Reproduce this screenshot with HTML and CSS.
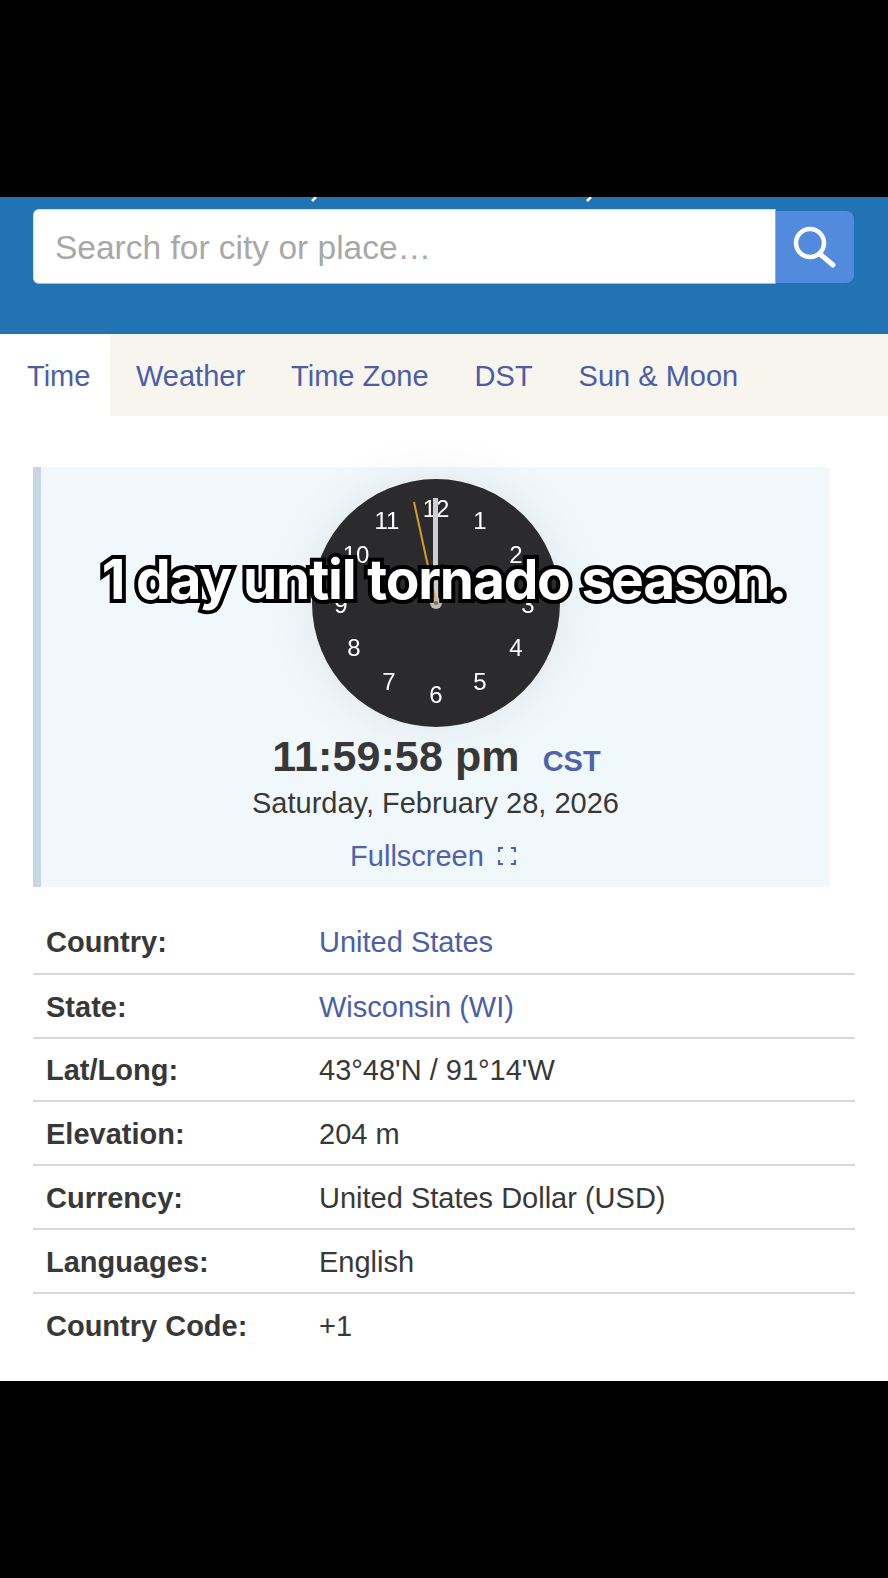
FILE: index.html
```html
<!DOCTYPE html>
<html lang="en">
<head>
    <meta charset="UTF-8">
    <meta name="viewport" content="width=device-width, initial-scale=1.0">
    <title>1 day until tornado season</title>
    <link rel="stylesheet" href="styles.css">
</head>
<body>
    <div class="letterbox-top"></div>

    <div class="page">
        <!-- Search header -->
        <header class="search-header">
            <!-- only the tails of the commas in the scrolled-off heading show -->
            <svg class="heading-ticks" width="888" height="6" viewBox="0 0 888 6">
                <path d="M316 0 L312 4 M591 0 L587 4" stroke="#fff" stroke-width="2.5"/>
            </svg>
            <form class="search-form">
                <div class="search-input">Search for city or place…</div>
                <button type="button" class="search-btn" aria-label="Search">
                    <svg width="46" height="46" viewBox="0 0 46 46">
                        <circle cx="18" cy="19" r="14" fill="none" stroke="#fff" stroke-width="4.5"/>
                        <path d="M28 30 L41 41" stroke="#fff" stroke-width="5" stroke-linecap="round"/>
                    </svg>
                </button>
            </form>
        </header>

        <!-- Tabs -->
        <nav class="tabs">
            <a class="tab tab-active">Time</a>
            <a class="tab">Weather</a>
            <a class="tab">Time Zone</a>
            <a class="tab">DST</a>
            <a class="tab">Sun &amp; Moon</a>
        </nav>

        <!-- Clock panel -->
        <section class="clock-panel">
            <svg class="clock" width="248" height="248" viewBox="0 0 248 248">
                <circle cx="124" cy="124" r="124" fill="#2b2b2d"/>
                <g class="clock-nums" text-anchor="middle">
                    <text x="124" y="38">12</text>
                    <text x="168" y="50">1</text>
                    <text x="204" y="84">2</text>
                    <text x="216" y="134">3</text>
                    <text x="204" y="177">4</text>
                    <text x="168" y="211">5</text>
                    <text x="124" y="224">6</text>
                    <text x="77" y="211">7</text>
                    <text x="42" y="177">8</text>
                    <text x="29" y="134">9</text>
                    <text x="44" y="84">10</text>
                    <text x="75" y="50">11</text>
                </g>
                <rect x="121" y="19" width="5" height="105" fill="#cfcfd1"/>
                <path d="M102 23 L124 124" stroke="#d99a26" stroke-width="2"/>
                <circle cx="124" cy="124" r="6" fill="#bdbdbd"/>
                <circle cx="124" cy="124" r="2" fill="#8a6a3a"/>
            </svg>
            <div class="clock-time">
                <span class="time-value">11:59:58 pm</span>
                <span class="time-zone">CST</span>
            </div>
            <div class="clock-date">Saturday, February 28, 2026</div>
            <a class="fullscreen">
                Fullscreen
                <svg width="18" height="18" viewBox="0 0 18 18" fill="none" stroke="#4f62ad" stroke-width="2.2">
                    <path d="M1 5 V1 H5 M13 1 H17 V5 M17 13 V17 H13 M5 17 H1 V13"/>
                </svg>
            </a>
        </section>

        <!-- Location facts -->
        <table class="facts">
            <tr><th>Country:</th><td><a>United States</a></td></tr>
            <tr><th>State:</th><td><a>Wisconsin (WI)</a></td></tr>
            <tr><th>Lat/Long:</th><td>43°48'N / 91°14'W</td></tr>
            <tr><th>Elevation:</th><td>204 m</td></tr>
            <tr><th>Currency:</th><td>United States Dollar (USD)</td></tr>
            <tr><th>Languages:</th><td>English</td></tr>
            <tr><th>Country Code:</th><td>+1</td></tr>
        </table>
    </div>

    <div class="letterbox-bottom"></div>

    <!-- Video caption over the page -->
    <div class="caption">1 day until tornado season.</div>
</body>
</html>
```

FILE: styles.css
```css
/* Page frame */
html, body {
    margin: 0;
    padding: 0;
}

body {
    position: relative;
    width: 888px;
    height: 1578px;
    overflow: hidden;
    background-color: #000;
    font-family: "Liberation Sans", Arial, sans-serif;
    font-size: 29px;
    color: #383838;
}

.letterbox-top {
    height: 197px;
}

.page {
    height: 1184px;
    overflow: hidden;
    background-color: #fff;
}

/* Search header */
.search-header {
    position: relative;
    height: 137px;
    box-sizing: border-box;
    padding: 12px 34px 0 33px;
    background-color: #2173b3;
}

.heading-ticks {
    position: absolute;
    top: 0;
    left: 0;
}

.search-form {
    display: flex;
    align-items: center;
}

.search-input {
    width: 743px;
    height: 75px;
    box-sizing: border-box;
    padding-left: 21px;
    background-color: #fff;
    border: 1px solid #cfe0ee;
    border-right-color: #a4aab0;
    border-bottom-color: #b4b9be;
    border-radius: 6px 0 0 6px;
    font-size: 33.5px;
    line-height: 75px;
    color: #a8a8a8;
}

.search-btn {
    display: flex;
    align-items: center;
    justify-content: center;
    width: 78px;
    height: 72px;
    padding: 0;
    background-color: #528bde;
    border: none;
    border-radius: 0 8px 8px 0;
}

/* Tabs */
.tabs {
    display: flex;
    height: 82px;
    background-color: #f8f4ee;
}

.tab {
    padding: 0 23px;
    line-height: 84px;
    color: #4b5ea8;
}

.tab-active {
    width: 110px;
    box-sizing: border-box;
    padding: 0 0 0 27px;
    margin-right: 3px;
    background-color: #fff;
}

/* Clock panel */
.clock-panel {
    width: 797px;
    height: 420px;
    box-sizing: border-box;
    margin: 51px 0 0 33px;
    padding-top: 12px;
    border-left: 8px solid #c6d6e4;
    background-color: #f1f8fc;
    text-align: center;
}

.clock {
    display: block;
    margin-left: 271px;
    filter: drop-shadow(0 0 24px rgba(0, 0, 0, 0.07));
}

.clock-nums {
    font-size: 24px;
    fill: #fff;
}

.clock-time {
    display: flex;
    align-items: baseline;
    justify-content: center;
    gap: 23px;
    margin-top: 4px;
    padding-left: 2px;
    line-height: 50px;
}

.time-value {
    font-size: 43px;
    font-weight: bold;
    letter-spacing: 0.1px;
}

.time-zone {
    font-size: 29px;
    font-weight: bold;
    color: #4f62ad;
}

.clock-date {
    margin-top: 1px;
    line-height: 32px;
}

.fullscreen {
    display: inline-flex;
    align-items: center;
    gap: 14px;
    margin-top: 18px;
    margin-right: 5px;
    line-height: 38px;
    color: #4f62ad;
}

/* Facts table */
.facts {
    width: 822px;
    margin: 23px 0 0 33px;
    border-collapse: collapse;
}

.facts th, .facts td {
    height: 63.8px;
    padding: 3px 0 0;
    box-sizing: border-box;
    text-align: left;
    font-weight: normal;
}

.facts tr {
    border-bottom: 2px solid #d9d9d9;
}

.facts tr:last-child {
    border-bottom: none;
}

.facts th {
    width: 286px;
    padding-left: 13px;
    font-weight: bold;
}

.facts a {
    color: #4b5ea8;
}

/* Caption */
.caption {
    position: absolute;
    top: 544px;
    left: 0;
    width: 888px;
    text-align: center;
    font-family: Inter, "Liberation Sans", sans-serif;
    font-size: 55px;
    font-weight: 700;
    line-height: 70px;
    letter-spacing: -1.2px;
    color: #fff;
    -webkit-text-stroke: 8px #000;
    paint-order: stroke fill;
}
```
